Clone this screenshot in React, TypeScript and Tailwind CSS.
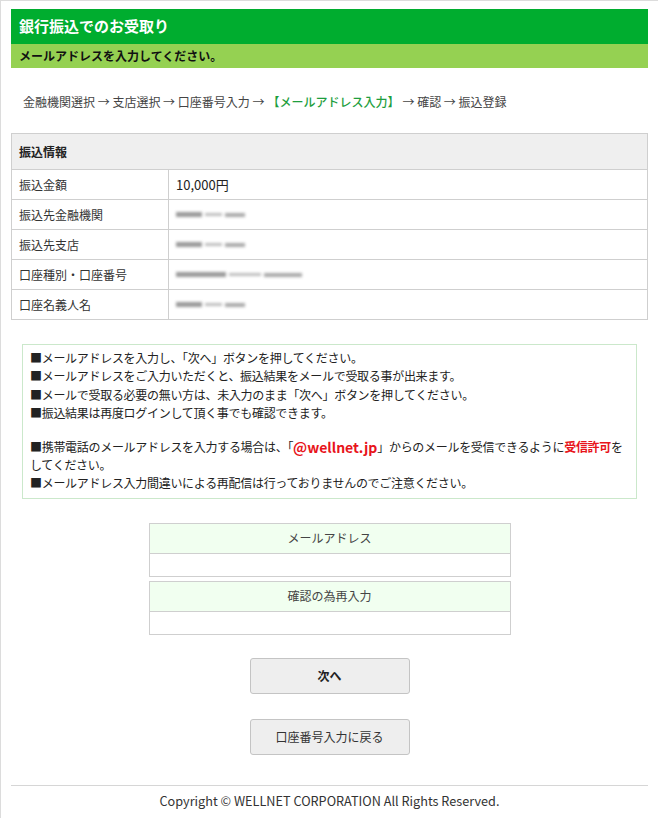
import React from "react";

const FONT = '"Noto Sans CJK JP", "Noto Sans", sans-serif';

function Blur({ w }: { w: number }) {
  return (
    <span className="flex items-center gap-[3px]" style={{ filter: "blur(1.6px)" }}>
      <span className="h-[5px] bg-[#9a9a9a]" style={{ width: Math.round(w * 0.4) }} />
      <span className="h-[3px] bg-[#bdbdbd]" style={{ width: Math.round(w * 0.25) }} />
      <span className="h-[4px] bg-[#a9a9a9]" style={{ width: Math.round(w * 0.3) }} />
    </span>
  );
}

export default function App() {
  const rows: [string, React.ReactNode][] = [
    ["振込金額", <span className="text-[13px] text-[#222]">10,000円</span>],
    ["振込先金融機関", <Blur w={66} />],
    ["振込先支店", <Blur w={66} />],
    ["口座種別・口座番号", <Blur w={126} />],
    ["口座名義人名", <Blur w={66} />],
  ];
  return (
    <div
      className="w-[658px] min-h-[818px] bg-white border-l border-t border-[#dcdcdc] pl-[10px] pr-[10px] pt-[8px] text-[#333] text-[12px]"
      style={{ fontFamily: FONT }}
    >
      <div className="h-[35px] bg-[#00ad2f] text-white font-bold text-[15px] pl-[8px] flex items-center">
        銀行振込でのお受取り
      </div>
      <div className="h-[24px] bg-[#95d152] text-[#111] font-bold text-[12px] pl-[8px] flex items-center">
        メールアドレスを入力してください。
      </div>

      <div className="mt-[24px] h-[20px] pl-[12px] flex items-center text-[12px] text-[#444] whitespace-nowrap">
        金融機関選択 → 支店選択 → 口座番号入力 →{" "}
        <span className="text-[#1e9e3e] font-medium mx-[3px]">【メールアドレス入力】</span> → 確認 → 振込登録
      </div>

      <div className="mt-[21px] border border-[#cfcfcf]">
        <div className="h-[35px] bg-[#efefef] flex items-center pl-[7px] font-bold text-[12px] text-[#222]">
          振込情報
        </div>
        {rows.map(([k, v], i) => (
          <div key={i} className="h-[30px] flex border-t border-[#cfcfcf]">
            <div className="w-[157px] border-r border-[#cfcfcf] flex items-center pl-[7px] text-[#333]">{k}</div>
            <div className="flex-1 flex items-center pl-[7px]">{v}</div>
          </div>
        ))}
      </div>

      <div className="mt-[24px] mx-[11px] border border-[#cbe8cb] pt-[4px] pb-[5px] pl-[7px] pr-[6px] leading-[18.3px] text-[12px] tracking-[-0.3px] text-[#222]">
        <div>■メールアドレスを入力し、「次へ」ボタンを押してください。</div>
        <div>■メールアドレスをご入力いただくと、振込結果をメールで受取る事が出来ます。</div>
        <div>■メールで受取る必要の無い方は、未入力のまま「次へ」ボタンを押してください。</div>
        <div>■振込結果は再度ログインして頂く事でも確認できます。</div>
        <div className="h-[16px]" />
        <div className="whitespace-nowrap h-[18px] flex items-center">
          <span>■携帯電話のメールアドレスを入力する場合は、「</span>
          <span className="text-[#e8141b] font-bold text-[14px] leading-[18px] tracking-normal">@wellnet.jp</span>
          <span>」からのメールを受信できるように</span>
          <span className="text-[#e8141b] font-bold">受信許可</span>
          <span>を</span>
        </div>
        <div>してください。</div>
        <div>■メールアドレス入力間違いによる再配信は行っておりませんのでご注意ください。</div>
      </div>

      <div className="mt-[24px] w-[362px] mx-auto flex flex-col gap-[4px]">
        {["メールアドレス", "確認の為再入力"].map((t) => (
          <div key={t} className="border border-[#cfcfcf]">
            <div className="h-[29px] bg-[#f1fff0] flex items-center justify-center text-[#444] text-[12px]">{t}</div>
            <div className="h-[23px] border-t border-[#cfcfcf] bg-white" />
          </div>
        ))}
      </div>

      <div className="mt-[23px] flex justify-center">
        <div className="w-[160px] h-[36px] bg-[#eeeeee] border border-[#c4c4c4] rounded-[3px] flex items-center justify-center font-bold text-[12px] text-[#222]">
          次へ
        </div>
      </div>
      <div className="mt-[25px] flex justify-center">
        <div className="w-[160px] h-[36px] bg-[#eeeeee] border border-[#c4c4c4] rounded-[3px] flex items-center justify-center text-[12px] text-[#333]">
          口座番号入力に戻る
        </div>
      </div>

      <div className="mt-[30px] border-t border-[#d6d6d6] h-[30px] flex items-center justify-center text-[12.7px] text-[#333]">
        Copyright © WELLNET CORPORATION All Rights Reserved.
      </div>
    </div>
  );
}
